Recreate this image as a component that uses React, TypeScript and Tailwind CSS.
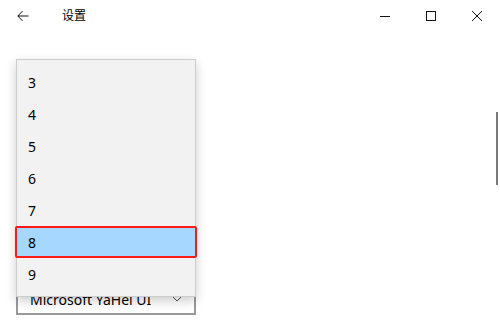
import React from 'react';

const items = ['3', '4', '5', '6', '7', '8', '9'];

export default function App() {
  const selected = '8';

  return (
    <div
      className="relative w-[500px] h-[330px] overflow-hidden bg-white text-black"
      style={{ fontFamily: '"Segoe UI", "Noto Sans", "Noto Sans CJK SC", sans-serif' }}
    >
      {/* Title bar */}
      <div className="flex h-8 items-center">
        <button className="flex h-8 w-[46px] items-center justify-center">
          <svg width="12" height="12" viewBox="0 0 12 12" fill="none" stroke="#111" strokeWidth="1">
            <path d="M11.5 6H0.8M5.5 1.2L0.8 6l4.7 4.8" />
          </svg>
        </button>
        <span className="ml-4 text-[12px] leading-none">设置</span>
        <div className="ml-auto flex">
          <button className="flex h-8 w-[46px] items-center justify-center">
            <svg width="10" height="10" viewBox="0 0 10 10" stroke="#111" strokeWidth="1">
              <path d="M0 5.5h10" />
            </svg>
          </button>
          <button className="flex h-8 w-[46px] items-center justify-center">
            <svg width="10" height="10" viewBox="0 0 10 10" fill="none" stroke="#111" strokeWidth="1">
              <rect x="0.5" y="0.5" width="9" height="9" />
            </svg>
          </button>
          <button className="flex h-8 w-[46px] items-center justify-center">
            <svg width="10" height="10" viewBox="0 0 10 10" stroke="#111" strokeWidth="1">
              <path d="M0 0l10 10M10 0L0 10" />
            </svg>
          </button>
        </div>
      </div>

      {/* Content */}
      <div className="px-4 pt-[251px]">
        <div className="flex h-8 w-[180px] items-center justify-between border-2 border-[#999] px-3 text-[14px]">
          <span>Microsoft YaHei UI</span>
          <svg width="10" height="6" viewBox="0 0 10 6" fill="none" stroke="#555" strokeWidth="1">
            <path d="M1 1l4 4 4-4" />
          </svg>
        </div>
      </div>

      {/* Open dropdown list */}
      <div className="absolute left-4 top-[59px] w-[180px] border border-[#cccccc] bg-[#f2f2f2] py-[6px] shadow-[0_4px_10px_rgba(0,0,0,0.2)]">
        {items.map((n) => (
          <div
            key={n}
            className={
              n === selected
                ? '-mx-[2px] flex h-8 items-center rounded-[2px] border-2 border-[#ff1a1a] bg-[#a6d7ff] pl-[11px] text-[14px]'
                : 'flex h-8 items-center pl-[11px] text-[14px]'
            }
          >
            {n}
          </div>
        ))}
      </div>

      {/* Scrollbar */}
      <div className="absolute right-[2px] top-[112px] h-[73px] w-[2px] bg-[#7a7a7a]" />
    </div>
  );
}
